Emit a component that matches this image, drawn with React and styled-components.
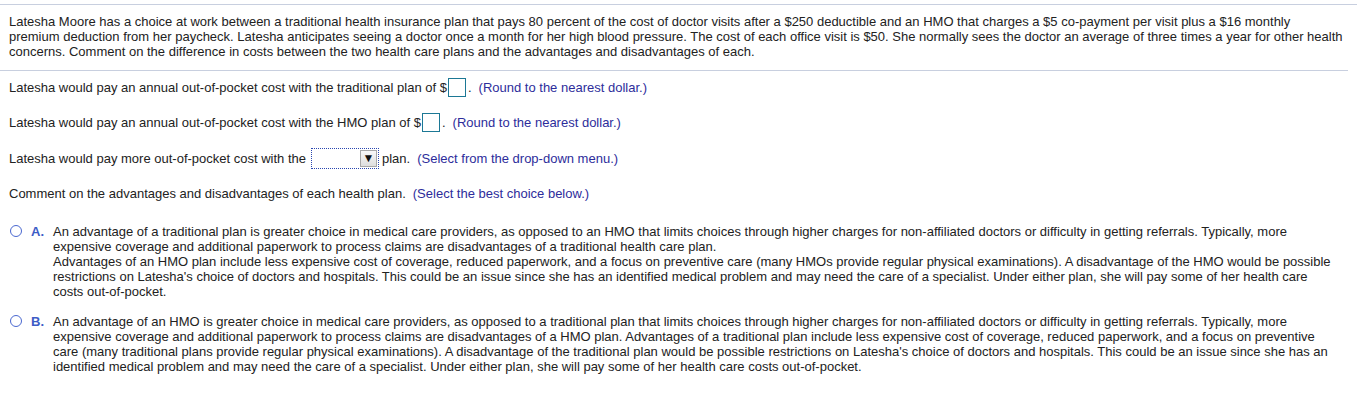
import React from "react";
import styled, { createGlobalStyle } from "styled-components";

const GlobalStyle = createGlobalStyle`
  body {
    margin: 0;
    background: #ffffff;
    font-family: "Liberation Sans", Arial, sans-serif;
    font-size: 13px;
    color: #222222;
  }
`;

const Page = styled.div`
  margin-top: 4px;
  border-top: 1px solid #c8cfdf;
  width: 1357px;
`;

const Question = styled.p`
  margin: 0;
  padding: 9px 8px 0 9px;
  line-height: 15px;
`;

const Divider = styled.div`
  margin: 11px 9px 0 0;
  border-top: 1px solid #c8cfdf;
`;

const Answers = styled.div`
  padding: 0 9px;
`;

const Line = styled.div`
  display: flex;
  align-items: center;
  height: 22px;
  margin-top: ${(p) => p.$top || 0}px;
  white-space: pre;
`;

const Hint = styled.span`
  color: #2d2d9b;
  margin-left: 7px;
`;

const AnswerBox = styled.span`
  display: inline-block;
  width: 16px;
  height: 17px;
  border: 1.5px solid #1c7895;
  background: #fff;
  margin: 0 2px 0 1px;
`;

const Select = styled.span`
  display: inline-flex;
  justify-content: flex-end;
  align-items: stretch;
  width: 66px;
  height: 19px;
  border: 1px dotted #2a46b0;
  margin: 0 3px 0 5px;
  background: #fff;
`;

const SelectButton = styled.span`
  width: 15px;
  margin: 1px;
  border: 1px solid #a8a8a8;
  background: linear-gradient(#f9f9f9, #dedede);
  display: flex;
  align-items: center;
  justify-content: center;
  font-size: 12px;
  line-height: 1;
  color: #111;
`;

const Choices = styled.div`
  margin-top: 20px;
  padding-left: 1px;
`;

const Choice = styled.div`
  display: flex;
  align-items: flex-start;
  margin-bottom: ${(p) => p.$gap || 0}px;
`;

const Radio = styled.span`
  flex: none;
  width: 10px;
  height: 10px;
  border: 1.5px solid #4a68d0;
  border-radius: 50%;
  margin-top: 1px;
`;

const Letter = styled.span`
  flex: none;
  width: 22px;
  margin-left: 9px;
  color: #3d5cc6;
  font-weight: bold;
  line-height: 15px;
`;

const ChoiceText = styled.div`
  line-height: 15px;
  padding-right: 10px;
  p {
    margin: 0;
  }
`;

export default function App() {
  return (
    <>
      <GlobalStyle />
      <Page>
        <Question>
          Latesha Moore has a choice at work between a traditional health insurance plan that pays 80 percent of the cost of doctor
          visits after a $250 deductible and an HMO that charges a $5 co-payment per visit plus a $16 monthly
          <br />
          premium deduction from her paycheck. Latesha anticipates seeing a doctor once a month for her high blood pressure. The
          cost of each office visit is $50. She normally sees the doctor an average of three times a year for other health
          <br />
          concerns. Comment on the difference in costs between the two health care plans and the advantages and disadvantages of
          each.
        </Question>
        <Divider />
        <Answers>
          <Line $top={5}>
            Latesha would pay an annual out-of-pocket cost with the traditional plan of $<AnswerBox />.
            <Hint>(Round to the nearest dollar.)</Hint>
          </Line>
          <Line $top={13}>
            Latesha would pay an annual out-of-pocket cost with the HMO plan of $<AnswerBox />.
            <Hint>(Round to the nearest dollar.)</Hint>
          </Line>
          <Line $top={14}>
            Latesha would pay more out-of-pocket cost with the
            <Select>
              <SelectButton>▼</SelectButton>
            </Select>
            plan.<Hint>(Select from the drop-down menu.)</Hint>
          </Line>
          <Line $top={13}>
            Comment on the advantages and disadvantages of each health plan.
            <Hint>(Select the best choice below.)</Hint>
          </Line>
          <Choices>
            <Choice $gap={15}>
              <Radio />
              <Letter>A.</Letter>
              <ChoiceText>
                <p>
                  An advantage of a traditional plan is greater choice in medical care providers, as opposed to an HMO that limits
                  choices through higher charges for non-affiliated doctors or difficulty in getting referrals. Typically, more
                  expensive coverage and additional paperwork to process claims are disadvantages of a traditional health care plan.
                </p>
                <p>
                  Advantages of an HMO plan include less expensive cost of coverage, reduced paperwork, and a focus on preventive
                  care (many HMOs provide regular physical examinations). A disadvantage of the HMO would be possible restrictions
                  on Latesha's choice of doctors and hospitals. This could be an issue since she has an identified medical problem
                  and may need the care of a specialist.  Under either plan, she will pay some of her health care costs
                  out-of-pocket.
                </p>
              </ChoiceText>
            </Choice>
            <Choice>
              <Radio />
              <Letter>B.</Letter>
              <ChoiceText>
                <p>
                  An advantage of an HMO is greater choice in medical care providers, as opposed to a traditional plan that limits
                  choices through higher charges for non-affiliated doctors or difficulty in getting referrals. Typically, more
                  expensive coverage and additional paperwork to process claims are disadvantages of a HMO plan. Advantages of a
                  traditional plan include less expensive cost of coverage, reduced paperwork, and a focus on preventive care (many
                  traditional plans provide regular physical examinations). A disadvantage of the traditional plan would be
                  possible restrictions on Latesha's choice of doctors and hospitals. This could be an issue since she has an
                  identified medical problem and may need the care of a specialist.  Under either plan, she will pay some of her
                  health care costs out-of-pocket.
                </p>
              </ChoiceText>
            </Choice>
          </Choices>
        </Answers>
      </Page>
    </>
  );
}
